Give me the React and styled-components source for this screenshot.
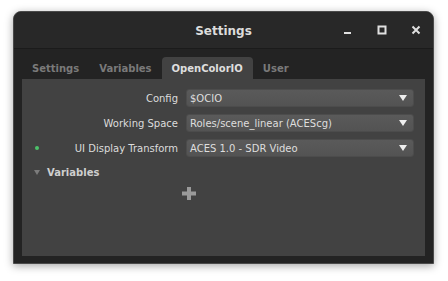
import React from "react";
import styled, { createGlobalStyle } from "styled-components";

const Global = createGlobalStyle`
  html, body {
    margin: 0;
    padding: 0;
    background: #ffffff;
  }
  body {
    font-family: "DejaVu Sans", "Liberation Sans", sans-serif;
  }
`;

const Page = styled.div`
  width: 448px;
  height: 281px;
  padding: 11px 14px 0 13px;
  box-sizing: border-box;
`;

const Window = styled.div`
  width: 421px;
  height: 253px;
  background: #232323;
  border: 1px solid #4a4a4a;
  border-radius: 8px 8px 0 0;
  box-shadow: 0 2px 8px rgba(0, 0, 0, 0.35);
  box-sizing: border-box;
  display: flex;
  flex-flow: column nowrap;
  overflow: hidden;
`;

const TitleBar = styled.div`
  height: 36px;
  flex: 0 0 auto;
  background: #282828;
  border-bottom: 1px solid #1b1b1b;
  position: relative;
  display: flex;
  align-items: center;
  justify-content: center;
`;

const Title = styled.div`
  color: #dcdcdc;
  font-size: 12px;
  font-weight: bold;
  padding-top: 1px;
`;

const Controls = styled.div`
  position: absolute;
  right: 0;
  top: 0;
  height: 100%;
  display: flex;
  align-items: center;
`;

const ControlButton = styled.div`
  width: 34px;
  height: 36px;
  display: flex;
  align-items: center;
  justify-content: center;
`;

const Body = styled.div`
  flex: 1 1 auto;
  padding: 8px 8px 7px 8px;
  display: flex;
  flex-flow: column nowrap;
`;

const Tabs = styled.div`
  display: flex;
  height: 22px;
  flex: 0 0 auto;
`;

const Tab = styled.div`
  padding: 0 10px;
  display: flex;
  align-items: center;
  font-size: 10px;
  font-weight: bold;
  color: ${(p) => (p.active ? "#dedede" : "#7a7a7a")};
  background: ${(p) => (p.active ? "#424242" : "transparent")};
  border-radius: 4px 4px 0 0;
`;

const Panel = styled.div`
  flex: 1 1 auto;
  background: #424242;
  padding: 10px 11px 0 0;
  display: flex;
  flex-flow: column nowrap;
`;

const Row = styled.div`
  display: grid;
  grid-template-columns: 156px 1fr;
  column-gap: 8px;
  align-items: center;
  height: 18px;
  margin-bottom: 7px;
`;

const Label = styled.div`
  display: flex;
  align-items: center;
  justify-content: space-between;
  font-size: 10px;
  color: #dcdcdc;
  padding-left: 13px;
`;

const Dot = styled.span`
  width: 4px;
  height: 4px;
  border-radius: 50%;
  background: ${(p) => (p.on ? "#4cc26a" : "transparent")};
`;

const Combo = styled.div`
  height: 18px;
  box-sizing: border-box;
  background: linear-gradient(#5a5a5a, #535353);
  border: 1px solid #4c4c4c;
  border-radius: 3px;
  display: flex;
  align-items: center;
  justify-content: space-between;
  padding: 0 6px 0 3px;
  font-size: 10px;
  color: #dedede;
`;

const Arrow = styled.span`
  width: 0;
  height: 0;
  border-left: 4px solid transparent;
  border-right: 4px solid transparent;
  border-top: 6px solid #eeeeee;
`;

const Section = styled.div`
  display: flex;
  align-items: center;
  height: 16px;
  padding-left: 12px;
  font-size: 10px;
  font-weight: bold;
  color: #cfcfcf;
`;

const SectionArrow = styled.span`
  width: 0;
  height: 0;
  border-left: 3px solid transparent;
  border-right: 3px solid transparent;
  border-top: 5px solid #7c7c7c;
  margin-right: 7px;
`;

const AddRow = styled.div`
  display: flex;
  padding-top: 7px;
  padding-left: 160px;
`;

const rows = [
  { label: "Config", value: "$OCIO" },
  { label: "Working Space", value: "Roles/scene_linear (ACEScg)" },
  { label: "UI Display Transform", value: "ACES 1.0 - SDR Video", dot: true },
];

export default function App() {
  return (
    <>
      <Global />
      <Page>
        <Window>
          <TitleBar>
            <Title>Settings</Title>
            <Controls>
              <ControlButton>
                <svg width="10" height="10" viewBox="0 0 10 10">
                  <rect x="1" y="7" width="7" height="2" fill="#e0e0e0" />
                </svg>
              </ControlButton>
              <ControlButton>
                <svg width="10" height="10" viewBox="0 0 10 10">
                  <rect x="1.5" y="1.5" width="7" height="7" fill="none" stroke="#e0e0e0" strokeWidth="2" />
                </svg>
              </ControlButton>
              <ControlButton>
                <svg width="10" height="10" viewBox="0 0 10 10">
                  <path d="M1.5 1.5 L8.5 8.5 M8.5 1.5 L1.5 8.5" stroke="#e0e0e0" strokeWidth="2" />
                </svg>
              </ControlButton>
            </Controls>
          </TitleBar>
          <Body>
            <Tabs>
              <Tab>Settings</Tab>
              <Tab>Variables</Tab>
              <Tab active>OpenColorIO</Tab>
              <Tab>User</Tab>
            </Tabs>
            <Panel>
              {rows.map((r) => (
                <Row key={r.label}>
                  <Label>
                    <Dot on={r.dot} />
                    {r.label}
                  </Label>
                  <Combo>
                    {r.value}
                    <Arrow />
                  </Combo>
                </Row>
              ))}
              <Section>
                <SectionArrow />
                Variables
              </Section>
              <AddRow>
                <svg width="14" height="13" viewBox="0 0 14 13">
                  <path d="M5 0 H9 V4.5 H14 V8.5 H9 V13 H5 V8.5 H0 V4.5 H5 Z" fill="#9a9a9a" />
                </svg>
              </AddRow>
            </Panel>
          </Body>
        </Window>
      </Page>
    </>
  );
}
